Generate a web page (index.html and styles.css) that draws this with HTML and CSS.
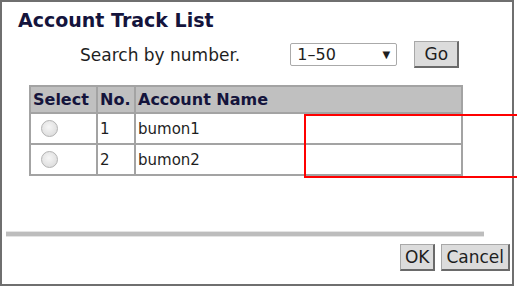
FILE: index.html
```html
<!DOCTYPE html>
<html>
  <head>
    <meta charset="UTF-8" />
    <title>Account Track List</title>
    <link rel="stylesheet" href="styles.css">
  </head>
  <body>
    <div class="dialog">
      <h1 class="title">Account Track List</h1>
      <div class="search">
        <span class="search-label">Search by number.</span>
        <div class="select">
          <span>1&ndash;50</span>
          <span class="arrow">&#9660;</span>
        </div>
        <button class="btn go">Go</button>
      </div>
      <table class="list">
        <colgroup>
          <col class="col-select" />
          <col class="col-no" />
          <col />
        </colgroup>
        <tr>
          <th>Select</th>
          <th>No.</th>
          <th>Account Name</th>
        </tr>
        <tr>
          <td><span class="radio"></span></td>
          <td>1</td>
          <td>bumon1</td>
        </tr>
        <tr>
          <td><span class="radio"></span></td>
          <td>2</td>
          <td>bumon2</td>
        </tr>
      </table>
      <div class="rule"></div>
      <div class="actions">
        <button class="btn">OK</button>
        <button class="btn">Cancel</button>
      </div>
    </div>
    <!-- highlight box drawn over the list -->
    <div class="mark"></div>
  </body>
</html>
```

FILE: styles.css
```css
html {
  overflow: hidden;
}
body {
  margin: 0;
  font-family: "DejaVu Sans", Verdana, sans-serif;
  color: #1e1e1e;
  background-color: #fff;
  position: relative;
}
.dialog {
  box-sizing: border-box;
  width: 514px;
  height: 286px;
  border: 2px solid #6f6f6f;
  padding: 7px 0 0 4px;
}
.title {
  margin: 0 0 0 12px;
  font-size: 19px;
  line-height: 22px;
  font-weight: bold;
  color: #14143c;
}
.search {
  display: flex;
  align-items: center;
  margin: 10px 0 0 74px;
  height: 27px;
}
.search-label {
  font-size: 17px;
  margin-right: 50px;
}
.select {
  box-sizing: border-box;
  width: 107px;
  height: 23px;
  border: 1px solid #aaa;
  border-radius: 2px;
  display: flex;
  align-items: center;
  justify-content: space-between;
  padding: 0 6px 0 6px;
  font-size: 16px;
  margin-right: 17px;
}
.arrow {
  font-size: 10px;
}
.btn {
  font-family: "DejaVu Sans", Verdana, sans-serif;
  font-size: 17px;
  color: #1e1e1e;
  background-color: #dcdcdc;
  border: 1px solid #a8a8a8;
  border-right: 2px solid #6a6a6a;
  border-bottom: 2px solid #6a6a6a;
  padding: 0 4px;
  height: 27px;
  line-height: 22px;
}
.go {
  width: 45px;
  padding: 0;
}
.list {
  margin: 17px 0 0 23px;
  width: 434px;
  border-collapse: collapse;
  table-layout: fixed;
  border: 2px solid #a3a3a3;
}
.col-select {
  width: 67px;
}
.col-no {
  width: 38px;
}
.list th,
.list td {
  border: 2px solid #a3a3a3;
  padding: 0 0 0 2px;
  text-align: left;
  white-space: nowrap;
}
.list th {
  background-color: #c0c0c0;
  color: #14143c;
  font-size: 16px;
  height: 25px;
}
.list td {
  font-size: 15px;
  height: 29px;
}
.radio {
  display: block;
  box-sizing: border-box;
  width: 17px;
  height: 17px;
  margin-left: 8px;
  border: 1px solid #b4b4b4;
  border-radius: 50%;
  background: radial-gradient(circle at 45% 40%, #f6f6f6, #d6d6d6);
}
.rule {
  margin: 55px 0 0 0;
  width: 478px;
  height: 4px;
  background-color: #bdbdbd;
  border-top: 1px solid #e4e4e4;
  border-bottom: 1px solid #e4e4e4;
}
.actions {
  display: flex;
  justify-content: flex-end;
  gap: 6px;
  margin-top: 7px;
  padding-right: 2px;
}
.mark {
  position: absolute;
  left: 304px;
  top: 114px;
  width: 211px;
  height: 60px;
  border: 2px solid #f00;
  border-right: none;
}
```
